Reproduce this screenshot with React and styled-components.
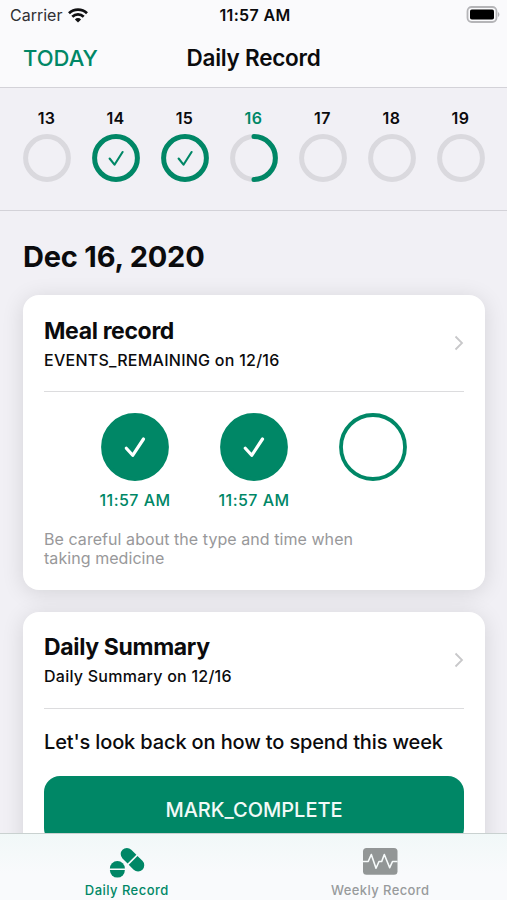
import React from 'react';
import styled, { createGlobalStyle } from 'styled-components';

const green = '#008766';

const GlobalStyle = createGlobalStyle`
  * {
    box-sizing: border-box;
  }
  body {
    margin: 0;
    background: #f1f0f5;
  }
`;

const Screen = styled.div`
  display: flex;
  flex-direction: column;
  width: 507px;
  height: 900px;
  overflow: hidden;
  background: #f1f0f5;
  color: #0b0b0d;
  font-family: Inter, "Liberation Sans", sans-serif;
`;

const Text = styled.span`
  display: block;
  white-space: nowrap;
  font-size: ${(p) => p.$size}px;
  line-height: ${(p) => p.$line || 20}px;
  font-weight: ${(p) => p.$weight || 500};
  letter-spacing: ${(p) => p.$spacing || 0}px;
  color: ${(p) => p.$color || 'inherit'};
`;

const Header = styled.header`
  flex: none;
  height: 88px;
  background: #fafafc;
  border-bottom: 1px solid #d3d2d8;
`;

const StatusBar = styled.div`
  display: grid;
  grid-template-columns: 1fr auto 1fr;
  align-items: center;
  height: 30px;
  padding: 0 7px 0 10px;
`;

const Carrier = styled.div`
  display: flex;
  align-items: center;
  gap: 6px;
`;

const Battery = styled.svg`
  justify-self: end;
  margin-top: -2px;
`;

const NavBar = styled.div`
  display: grid;
  grid-template-columns: 1fr auto 1fr;
  align-items: center;
  height: 56px;
  padding: 0 23px;
`;

const Week = styled.section`
  flex: none;
  display: flex;
  justify-content: space-between;
  height: 123px;
  padding: 20px 22px 0;
  border-bottom: 1px solid #d3d2d8;
`;

const Day = styled.div`
  display: flex;
  flex-direction: column;
  align-items: center;
  width: 49px;
  gap: 6px;
`;

const Content = styled.main`
  flex: 1;
  min-height: 0;
  overflow: hidden;
  padding: 28px 22px 0 23px;
`;

const DateTitle = styled.h1`
  margin: 0 0 20px;
  font-size: 29px;
  line-height: 36px;
  font-weight: 700;
  letter-spacing: -0.2px;
`;

const Card = styled.article`
  height: ${(p) => p.$height}px;
  margin-bottom: 21.5px;
  padding: 22px 21px 0;
  background: #fff;
  border-radius: 16px;
  box-shadow: 0 3px 22px rgba(0, 0, 0, 0.12);
`;

const CardHeader = styled.div`
  display: flex;
  align-items: center;
  justify-content: space-between;
  height: 75px;
  padding-bottom: 22px;
  margin-bottom: 21px;
  border-bottom: 1px solid #dcdcde;
`;

const CardTitles = styled.div`
  padding-top: 5px;
`;

const Meals = styled.div`
  display: flex;
  justify-content: center;
  gap: 45px;
  height: 117px;
`;

const Meal = styled.div`
  display: flex;
  flex-direction: column;
  align-items: center;
  width: 74px;
  gap: 9px;
`;

const CompleteButton = styled.button`
  display: flex;
  align-items: center;
  justify-content: center;
  width: 100%;
  height: 68px;
  margin-top: 21px;
  padding: 0;
  border: 0;
  border-radius: 16px;
  background: ${green};
  color: #f2faf8;
  font-family: inherit;
`;

const TabBar = styled.nav`
  position: relative;
  flex: none;
  display: grid;
  grid-template-columns: 1fr 1fr;
  height: 67px;
  border-top: 1px solid #c9d1d0;
  background: linear-gradient(#f1f8f8, #f9fafc 60%);
`;

const Tab = styled.div`
  display: flex;
  flex-direction: column;
  align-items: center;
  padding-top: 12px;
  gap: 3px;
`;

const WifiIcon = () => (
  <svg width="20" height="15" viewBox="0 0 20 15">
    <g fill="none" stroke="#101012" strokeWidth="2.7">
      <path d="M1 5.3a12.8 12.8 0 0 1 18 0" />
      <path d="M4.3 8.8a8.1 8.1 0 0 1 11.4 0" />
    </g>
    <path d="M10 14.4l-3.1-3a4.4 4.4 0 0 1 6.2 0z" fill="#101012" />
  </svg>
);

const BatteryIcon = () => (
  <Battery width="34" height="17" viewBox="0 0 34 17">
    <rect x="1.5" y="1" width="29" height="15" rx="4.2" fill="#fafafc" stroke="#b5b5b8" strokeWidth="1.8" />
    <rect x="4" y="3.5" width="24" height="10" rx="1.8" fill="#000" />
    <path d="M32 6v5q1.4-.7 1.4-2.5T32 6z" fill="#b5b5b8" />
  </Battery>
);

const Ring = ({ state }) => (
  <svg width="48" height="48" viewBox="0 0 48 48" fill="none">
    <circle cx="24" cy="24" r="21.4" stroke={state === 'done' ? green : '#dad9de'} strokeWidth="5" />
    {state === 'half' && (
      <path d="M24 2.6a21.4 21.4 0 0 1 0 42.8" stroke={green} strokeWidth="5" strokeLinecap="round" />
    )}
    {state === 'done' && (
      <path d="M17.6 24.5l4.9 6.2L30.6 18" stroke={green} strokeWidth="2.1" strokeLinecap="round" strokeLinejoin="round" />
    )}
  </svg>
);

const MealCircle = ({ done }) => (
  <svg width="68" height="68" viewBox="0 0 68 68">
    <circle cx="34" cy="34" r="32" fill={done ? green : 'none'} stroke={green} strokeWidth="3.8" />
    {done && (
      <path
        d="M25.3 35.2l6.4 7.1L42.5 26"
        fill="none"
        stroke="#fff"
        strokeWidth="3.2"
        strokeLinecap="round"
        strokeLinejoin="round"
      />
    )}
  </svg>
);

const Chevron = () => (
  <svg width="10" height="16" viewBox="0 0 10 16">
    <path d="M1.5 1.5L8 8l-6.5 6.5" fill="none" stroke="#c8c8ca" strokeWidth="1.8" />
  </svg>
);

const PillsIcon = () => (
  <svg width="36" height="32" viewBox="0 0 36 32">
    <g transform="translate(-0.4 0.8) rotate(45 23.8 12.8)" fill={green}>
      <path d="M23.2 6.6v12.4H16a6.2 6.2 0 0 1 0-12.4z" />
      <path d="M24.8 6.6v12.4h7a6.2 6.2 0 0 0 0-12.4z" />
    </g>
    <path d="M.9 22.5a7.5 7.5 0 0 1 15 0z" fill={green} />
    <path d="M.9 24.1a7.5 7.5 0 0 0 15 0z" fill={green} />
  </svg>
);

const PulseIcon = () => (
  <svg width="36" height="32" viewBox="0 0 36 32">
    <rect x="1" y="2" width="34.5" height="26.7" rx="3.5" fill="#929696" />
    <path
      d="M1 15.5h5.2l3.1-7L14 22.3l3-6.8h2.7l2.6-7 5.4 13.2 2.8-6.2h5"
      fill="none"
      stroke="#f7fbfb"
      strokeWidth="1.6"
      strokeLinejoin="round"
    />
  </svg>
);

const RecordHeader = ({ title, subtitle }) => (
  <CardHeader>
    <CardTitles>
      <Text $size={23} $line={28} $weight={700} $spacing={-0.35}>{title}</Text>
      <Text $size={16} $line={30} $spacing={0.25}>{subtitle}</Text>
    </CardTitles>
    <Chevron />
  </CardHeader>
);

const days = [
  { date: 13 },
  { date: 14, state: 'done' },
  { date: 15, state: 'done' },
  { date: 16, state: 'half' },
  { date: 17 },
  { date: 18 },
  { date: 19 },
];

const meals = ['11:57 AM', '11:57 AM', null];

const App = () => {
  return (
    <Screen>
      <GlobalStyle />
      <Header>
        <StatusBar>
          <Carrier>
            <Text $size={16} $weight={400} $color="#303033">Carrier</Text>
            <WifiIcon />
          </Carrier>
          <Text $size={16} $weight={600} $spacing={0.35}>11:57 AM</Text>
          <BatteryIcon />
        </StatusBar>
        <NavBar>
          <Text $size={22} $line={28} $color={green}>TODAY</Text>
          <Text $size={22.5} $line={28} $weight={600} $spacing={-0.25}>Daily Record</Text>
        </NavBar>
      </Header>
      <Week>
        {days.map(({ date, state }) => (
          <Day key={date}>
            <Text $size={16} $weight={600} $spacing={0.4} $color={state === 'half' ? green : undefined}>
              {date}
            </Text>
            <Ring state={state} />
          </Day>
        ))}
      </Week>
      <Content>
        <DateTitle>Dec 16, 2020</DateTitle>
        <Card $height={295}>
          <RecordHeader title="Meal record" subtitle="EVENTS_REMAINING on 12/16" />
          <Meals>
            {meals.map((time, i) => (
              <Meal key={i}>
                <MealCircle done={Boolean(time)} />
                {time && <Text $size={16} $spacing={0.45} $color={green}>{time}</Text>}
              </Meal>
            ))}
          </Meals>
          <Text $size={16} $line={19} $weight={400} $spacing={0.06} $color="#98989a">
            Be careful about the type and time when
            <br />
            taking medicine
          </Text>
        </Card>
        <Card $height={300}>
          <RecordHeader title="Daily Summary" subtitle="Daily Summary on 12/16" />
          <Text $size={20} $line={25} $spacing={-0.14}>Let's look back on how to spend this week</Text>
          <CompleteButton>
            <Text $size={20} $line={26}>MARK_COMPLETE</Text>
          </CompleteButton>
        </Card>
      </Content>
      <TabBar>
        <Tab>
          <PillsIcon />
          <Text $size={13} $line={18} $spacing={0.45} $color={green}>Daily Record</Text>
        </Tab>
        <Tab>
          <PulseIcon />
          <Text $size={13} $line={18} $spacing={0.4} $color="#989b9c">Weekly Record</Text>
        </Tab>
      </TabBar>
    </Screen>
  );
};

export default App;
